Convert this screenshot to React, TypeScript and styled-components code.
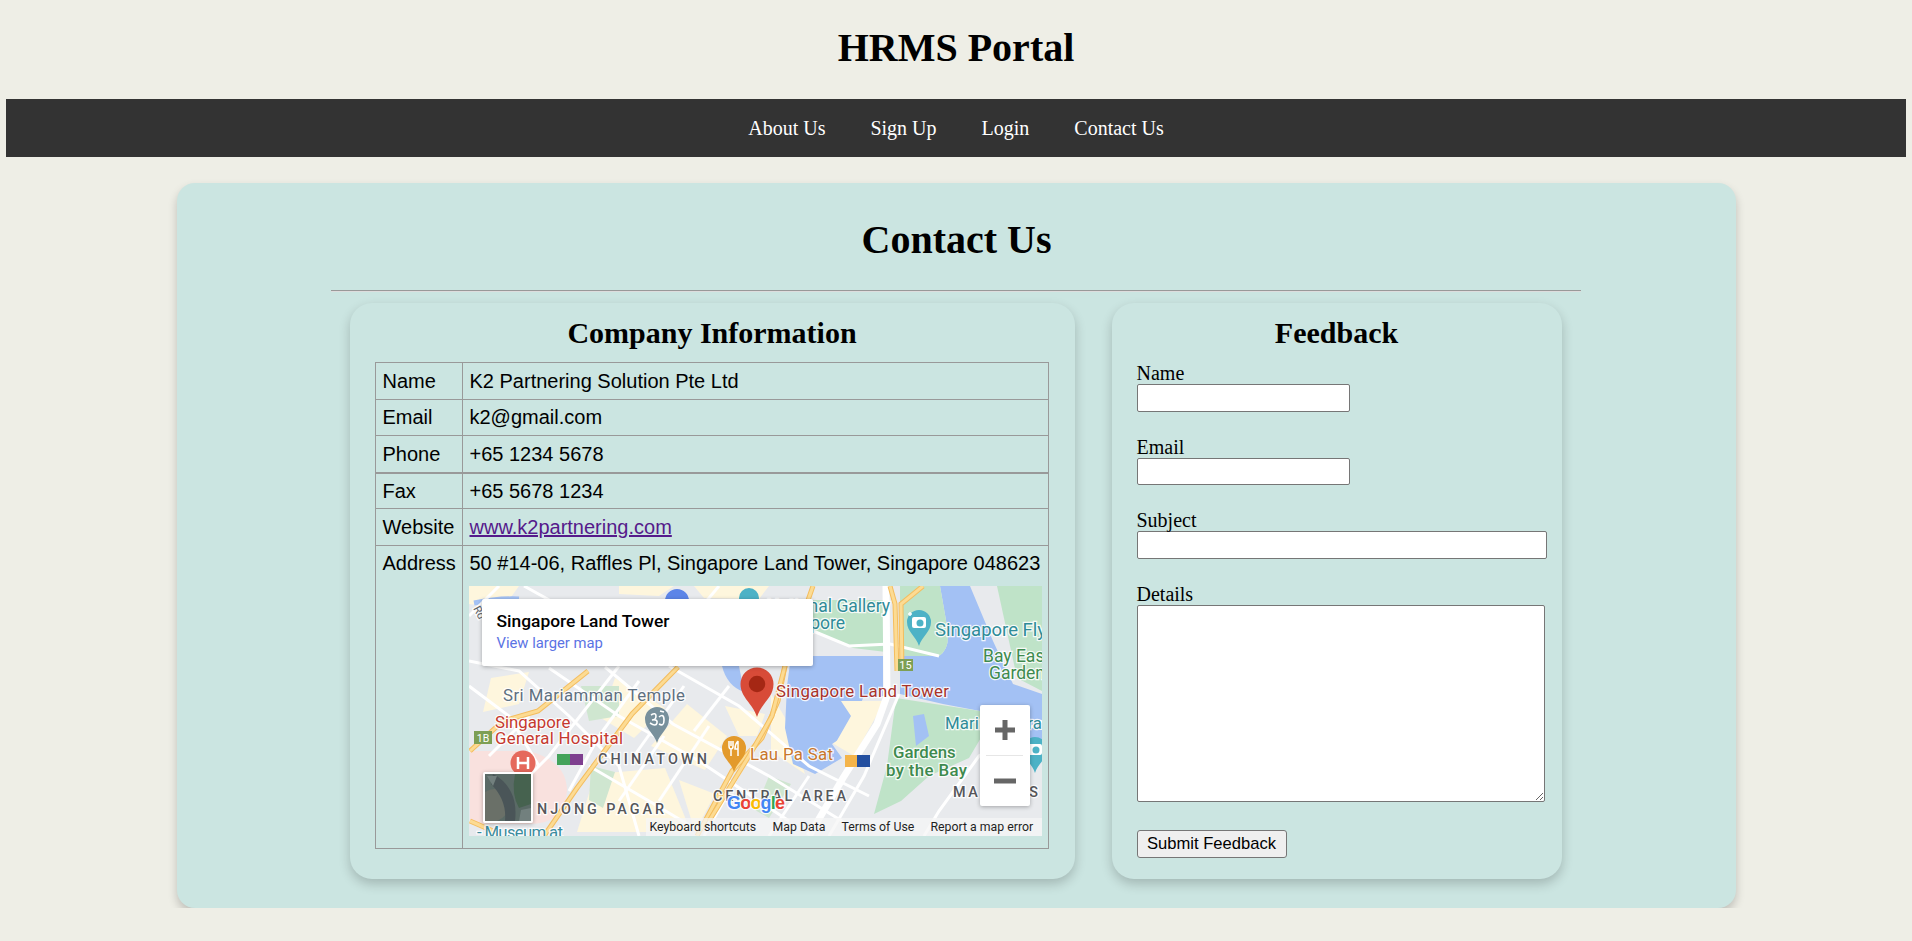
import styled, { createGlobalStyle } from 'styled-components';

const GlobalStyle = createGlobalStyle`
  body {
    margin: 0 6px;
    background-color: #eeeee6;
    color: #000;
    font-family: "Liberation Serif", serif;
    font-size: 20px;
  }
`;

const PageTitle = styled.h1`
  margin: 0;
  padding: 26px 0 29px;
  height: 99px;
  box-sizing: border-box;
  font-size: 40px;
  line-height: 44px;
  text-align: center;
`;

const NavBar = styled.nav`
  display: flex;
  justify-content: center;
  align-items: center;
  gap: 45px;
  height: 58px;
  background-color: #333;
`;

const NavLink = styled.a`
  color: #fff;
  text-decoration: none;
`;

const Panel = styled.main`
  width: 1559px;
  height: 725px;
  box-sizing: border-box;
  margin: 26px 0 0 171px;
  padding-top: 35px;
  background-color: #cbe5e1;
  border-radius: 18px;
  box-shadow: 0 5px 10px rgba(0, 0, 0, 0.2);
`;

const PanelTitle = styled.h1`
  margin: 0;
  font-size: 40px;
  line-height: 44px;
  text-align: center;
`;

const Rule = styled.hr`
  width: 1250px;
  margin: 28px 0 11px 154px;
  border: 0;
  border-top: 1px solid #999;
  border-bottom: 1px solid #ddd;
`;

const Cards = styled.div`
  display: flex;
  justify-content: center;
  gap: 37px;
  padding-right: 2px;
`;

const Card = styled.section<{ $width: number }>`
  width: ${p => p.$width}px;
  height: 576px;
  box-sizing: border-box;
  padding: 13px 25px 0;
  background-color: #cbe5e1;
  border-radius: 22px;
  box-shadow: 0 5px 12px rgba(0, 0, 0, 0.2);
`;

const CardTitle = styled.h2`
  margin: 0 0 13px;
  font-size: 30px;
  line-height: 33px;
  text-align: center;
`;

const InfoTable = styled.table`
  width: 674px;
  border-collapse: collapse;
  table-layout: fixed;
  font-family: "Liberation Sans", Arial, sans-serif;
  font-size: 20px;
  line-height: 24px;
`;

const Cell = styled.td<{ $label?: boolean }>`
  width: ${p => (p.$label ? '87px' : 'auto')};
  box-sizing: border-box;
  padding: 6px 5px 6px 7px;
  border: 1px solid #999;
  vertical-align: top;
  white-space: nowrap;
`;

const TightRow = styled.tr`
  td {
    padding-top: 5px;
    padding-bottom: 6px;
  }
`;

const ThickRow = styled(TightRow)`
  td {
    border-top-width: 2px;
    padding-top: 5px;
    padding-bottom: 5px;
  }
`;

const SiteLink = styled.a`
  color: #551a8b;
`;

const MapFrame = styled.div`
  position: relative;
  width: 573px;
  height: 250px;
  margin: 11px 0 6px -1px;
  overflow: hidden;
  background-color: #e8eaed;
  font-family: Roboto, sans-serif;
`;

const MapCanvas = styled.svg`
  display: block;
  font-family: Roboto, sans-serif;
`;

const MapLabel = styled.text<{ $color: string; $size?: number; $weight?: number }>`
  fill: ${p => p.$color};
  font-size: ${p => p.$size ?? 15}px;
  font-weight: ${p => p.$weight ?? 400};
  stroke: rgba(255, 255, 255, 0.85);
  stroke-width: 2.5px;
  paint-order: stroke;
`;

const InfoCard = styled.div`
  position: absolute;
  left: 13px;
  top: 13px;
  width: 331px;
  height: 67px;
  box-sizing: border-box;
  padding: 11px 15px;
  background-color: #fff;
  border-radius: 2px;
  box-shadow: 0 1px 4px rgba(0, 0, 0, 0.3);
`;

const PlaceName = styled.div`
  font-size: 17.4px;
  font-weight: 500;
  line-height: 22px;
  color: #000;
`;

const LargerMap = styled.div`
  margin-top: 2px;
  font-size: 14.8px;
  line-height: 18px;
  color: #5b73e4;
`;

const ZoomControl = styled.div`
  position: absolute;
  left: 511px;
  top: 119px;
  width: 50px;
  height: 101px;
  display: flex;
  flex-direction: column;
  align-items: center;
  background-color: #fff;
  border-radius: 2px;
  box-shadow: 0 1px 4px rgba(0, 0, 0, 0.3);
`;

const ZoomButton = styled.div`
  flex: 1;
  display: flex;
  align-items: center;
  justify-content: center;
`;

const ZoomDivider = styled.div`
  width: 37px;
  height: 1px;
  background-color: #e6e6e6;
`;

const SatelliteThumb = styled.div`
  position: absolute;
  left: 14px;
  top: 186px;
  width: 50px;
  height: 51px;
  box-sizing: border-box;
  border: 2px solid #fff;
  border-radius: 2px;
  overflow: hidden;
  box-shadow: 0 1px 4px rgba(0, 0, 0, 0.3);
`;

const Attribution = styled.div`
  position: absolute;
  right: 0;
  bottom: 0;
  height: 18px;
  width: 396px;
  box-sizing: border-box;
  padding-left: 4px;
  display: flex;
  align-items: center;
  font-size: 12.3px;
  color: #1f1f1f;
  background-color: rgba(245, 245, 245, 0.75);
`;

const AttributionItem = styled.span<{ $width: number }>`
  width: ${p => p.$width}px;
  white-space: nowrap;
`;

const FeedbackForm = styled.form`
  display: flex;
  flex-direction: column;
  align-items: flex-start;
`;

const FieldLabel = styled.label`
  display: block;
  line-height: 22px;
`;

const Field = styled.div<{ $gap: number }>`
  margin-bottom: ${p => p.$gap}px;
`;

const TextInput = styled.input<{ $width: number; $height: number }>`
  display: block;
  width: ${p => p.$width}px;
  height: ${p => p.$height}px;
  box-sizing: border-box;
  padding: 1px 2px;
  background: #fff;
  border: 1px solid #767676;
  border-radius: 2px;
  font-size: 16px;
`;

const DetailsBox = styled.textarea`
  display: block;
  width: 408px;
  height: 197px;
  box-sizing: border-box;
  margin: 0;
  padding: 2px;
  background: #fff;
  border: 1px solid #767676;
  border-radius: 2px;
`;

const SubmitButton = styled.button`
  width: 150px;
  height: 28px;
  padding: 0;
  background-color: #efefef;
  border: 1px solid #767676;
  border-radius: 3px;
  font-family: "Liberation Sans", Arial, sans-serif;
  font-size: 16.6px;
  color: #000;
`;

const blue = '#a3c1f4';
const green = '#bfe3c8';
const cream = '#fef6dd';

const creamBlocks = [
  '0,0 50,0 34,22 0,18',
  '150,0 205,0 190,10 150,8',
  '225,0 300,0 290,13 235,12',
  '22,92 60,86 50,118 14,126',
  '146,92 196,122 165,152 132,132',
  '218,118 258,150 236,184 182,160',
  '256,120 296,128 288,150 270,150',
  '126,188 196,182 222,246 108,246',
  '210,194 246,208 226,246',
  '302,108 318,135 336,188 302,165',
  '375,115 414,118 385,170 360,155',
];

const parks = [
  '112,100 150,100 150,130 120,135',
  '122,180 146,186 134,222 120,214',
  '300,190 322,198 300,232 286,224',
];

const whiteRoads = [
  '136,81 204,138 300,190 381,240',
  '80,82 150,130 230,175 320,235',
  '200,80 270,120 340,180 400,210',
  '0,75 50,85 100,130 150,180 170,250',
  '60,130 20,170',
  '150,80 80,170 60,190',
  '240,140 190,215',
  '280,170 235,250',
  '195,150 150,215',
  '340,190 300,250',
  '344,45 380,60 421,58 470,70',
  '30,0 0,30',
  '55,0 100,25 150,60',
  '250,0 225,30 200,60',
  '0,100 40,130 70,180',
  '170,95 130,150 100,205',
  '215,100 165,170',
  '120,180 180,215 230,245',
  '260,100 225,145',
];

const highways = [
  '209,81 163,128 108,202 75,250',
  '119,85 69,125 34,135 1,165',
  '1,235 31,248',
  '344,0 316,80 309,115 293,152 263,185 228,250',
  '316,80 303,130 280,170 240,235',
  '421,0 426,18 428,85',
  '454,0 432,18 433,85',
];

function Marker({ x, y, color, r = 12, children }: { x: number; y: number; color: string; r?: number; children?: React.ReactNode }) {
  return (
    <g transform={`translate(${x} ${y}) scale(${r / 12})`}>
      <path d="M0 24C-3 14-12 10-12 0A12 12 0 1 1 12 0C12 10 3 14 0 24Z" fill={color} />
      {children}
    </g>
  );
}

function MapDrawing() {
  return (
    <MapCanvas width={573} height={250} viewBox="0 0 573 250">
      <rect width={573} height={250} fill="#e8eaed" />
      {creamBlocks.map(points => <polygon key={points} points={points} fill={cream} />)}
      <path d="M1 165H60Q98 175 98 205Q96 238 60 238H1Z" fill="#f9e1de" />
      {parks.map(points => <polygon key={points} points={points} fill="#cfe6d0" />)}

      {/* water */}
      <path d="M471 0H501L524 55L544 98L573 108V168L515 150L511 125L474 118L431 108V70H470Q482 62 478 40Z" fill={blue} />
      <path d="M322 70H414V110L394 112L388 128L378 148L363 158L373 172L346 188L324 178L316 142L318 100Z" fill={blue} />
      <path d="M253 80H270L275 106Q258 100 253 80Z" fill={blue} />
      <path d="M5 17Q30 12 50 13" stroke={blue} strokeWidth={5} fill="none" />

      {/* parks */}
      <path d="M344 14H417V66L384 62L344 46Z" fill={green} />
      <path d="M431 0H471L478 40Q482 62 470 70H431Z" fill={green} />
      <path d="M528 0H573V105L548 92Z" fill={green} />
      <path d="M427 112L511 125L513 150L500 172L460 190L432 215L405 228L418 180Z" fill={green} />
      <path d="M444 130L455 128L460 150L447 160Z" fill={blue} />
      <path d="M372 115H414L384 168L366 158L382 130Z" fill={cream} />

      {whiteRoads.map(points => (
        <polyline key={points} points={points} fill="none" stroke="#fff" strokeWidth={3} />
      ))}
      <polyline points="417,0 418,110 408,138 374,192 340,250" fill="none" stroke="#fff" strokeWidth={7} />
      <polyline points="430,108 395,190 360,250" fill="none" stroke="#fff" strokeWidth={3} />
      <polyline points="573,135 510,170 470,225 455,250" fill="none" stroke="#fff" strokeWidth={3} />
      {highways.map(points => (
        <g key={points}>
          <polyline points={points} fill="none" stroke="#f4bd5e" strokeWidth={5} />
          <polyline points={points} fill="none" stroke="#fcdb93" strokeWidth={3} />
        </g>
      ))}

      <Marker x={208} y={15} color="#5c85e8" />
      <Marker x={280} y={12} color="#4db2c6" r={10} />

      <MapLabel x={421} y={26} textAnchor="end" $color="#2f8b98" $size={17.5}>National Gallery</MapLabel>
      <MapLabel x={376} y={43} textAnchor="end" $color="#2f8b98" $size={17.5}>Singapore</MapLabel>
      <Marker x={450} y={36} color="#4db2c6">
        <rect x={-7} y={-5} width={14} height={11} rx={2} fill="#fff" />
        <circle cx={1} cy={1} r={3.5} fill="#4db2c6" />
        <path d="M-11-8H-7M-9-10V-6" stroke="#fff" strokeWidth={1.5} />
      </Marker>
      <MapLabel x={466} y={50} $color="#2f8b98" $size={18.5}>Singapore Flyer</MapLabel>
      <rect x={429} y={73} width={15} height={12} fill="#7d9f54" />
      <text x={436.5} y={83} textAnchor="middle" fontSize={11} fill="#fff">15</text>
      <MapLabel x={514} y={76} $color="#3e8a4e" $size={17.5}>Bay East</MapLabel>
      <MapLabel x={520} y={93} $color="#3e8a4e" $size={17.5}>Garden</MapLabel>

      <MapLabel x={2} y={26} transform="rotate(62 6 26)" $color="#5f6368" $size={11}>Rd</MapLabel>
      <MapLabel x={34} y={115} textLength={182} $color="#5f7080" $size={16.8}>Sri Mariamman Temple</MapLabel>
      <Marker x={188} y={133} color="#78909c">
        <path d="M-6-4Q-1-7-1-3T-5 1Q1 0 0 4T-7 4M2-2Q7-6 7 1T2 5M3-8L7-7" fill="none" stroke="#fff" strokeWidth={1.6} />
      </Marker>
      <MapLabel x={26} y={142} $color="#c5392e" $size={16.8}>Singapore</MapLabel>
      <MapLabel x={26} y={158} textLength={128} $color="#c5392e" $size={16.8}>General Hospital</MapLabel>
      <rect x={5} y={145} width={18} height={13} fill="#7d9f54" />
      <text x={14} y={155.5} textAnchor="middle" fontSize={10.5} fill="#fff">1B</text>
      <circle cx={54} cy={177} r={12.5} fill="#e5695c" />
      <path d="M49 171V183M59 171V183M49 177H59" stroke="#fff" strokeWidth={2.5} />
      <rect x={88} y={168} width={13} height={11} fill="#43a35a" />
      <rect x={101} y={168} width={13} height={11} fill="#7e3f8f" />
      <MapLabel x={129} y={178} textLength={109} $color="#55565a" $size={14.4} $weight={500}>CHINATOWN</MapLabel>
      <MapLabel x={68} y={228} textLength={127} $color="#55565a" $size={14.4} $weight={500}>NJONG PAGAR</MapLabel>
      <MapLabel x={244} y={215} textLength={133} $color="#55565a" $size={14.4} $weight={500}>CENTRAL AREA</MapLabel>
      <MapLabel x={484} y={211} textLength={85} $color="#55565a" $size={14.4} $weight={500}>MARINA S</MapLabel>
      <MapLabel x={8} y={252} textLength={86} $color="#3a8c9e" $size={16.8}>- Museum at</MapLabel>

      <Marker x={265} y={162} color="#e39a2c">
        <path d="M-5-7V-2Q-5 1-3 1V8M-3-7V-2M-1-7V-2Q-1 1-3 1M4-7V8M4-7Q1-4 1 1H4" fill="none" stroke="#fff" strokeWidth={1.5} />
      </Marker>
      <MapLabel x={281} y={174} textLength={83} $color="#c9772b" $size={16.8}>Lau Pa Sat</MapLabel>
      <rect x={376} y={169} width={12} height={12} fill="#f4b44a" />
      <rect x={388} y={169} width={13} height={12} fill="#2450a0" />
      <MapLabel x={424} y={172} $color="#3e8a4e" $size={16.8} $weight={500}>Gardens</MapLabel>
      <MapLabel x={417} y={190} textLength={81} $color="#3e8a4e" $size={16.8} $weight={500}>by the Bay</MapLabel>
      <MapLabel x={476} y={143} textLength={97} $color="#2f8b98" $size={16.8}>Marina Barra</MapLabel>
      <Marker x={566} y={163} color="#4db2c6">
        <rect x={-7} y={-5} width={14} height={11} rx={2} fill="#fff" />
        <circle cx={1} cy={1} r={3.5} fill="#4db2c6" />
      </Marker>

      <Marker x={288} y={98} color="#d84b38" r={16.5}>
        <circle r={6} fill="#a52714" />
      </Marker>
      <MapLabel x={307} y={111} textLength={173} $color="#a8322a" $size={16.8}>Singapore Land Tower</MapLabel>

      <MapLabel x={258} y={223} textLength={58} fontFamily="Liberation Sans" $color="#4285f4" $size={18} $weight={700}>
        G<tspan fill="#ea4335">o</tspan><tspan fill="#fbbc05">o</tspan><tspan fill="#4285f4">g</tspan><tspan fill="#34a853">l</tspan><tspan fill="#ea4335">e</tspan>
      </MapLabel>
    </MapCanvas>
  );
}

function SatelliteTile() {
  return (
    <svg width={46} height={47} viewBox="0 0 46 47">
      <rect width={46} height={47} fill="#5a6a66" />
      <path d="M30 0H46V30L34 34Q26 20 30 0Z" fill="#46624f" />
      <path d="M0 18Q14 10 22 24T12 47H0Z" fill="#6a7068" />
      <path d="M8 0Q20 6 26 18T30 47H20Q22 26 6 10Z" fill="#4a5558" />
      <path d="M2 2H12L8 12ZM36 36L46 34V47H34Z" fill="#72807e" />
    </svg>
  );
}

function MapEmbed() {
  return (
    <MapFrame>
      <MapDrawing />
      <InfoCard>
        <PlaceName>Singapore Land Tower</PlaceName>
        <LargerMap>View larger map</LargerMap>
      </InfoCard>
      <ZoomControl>
        <ZoomButton>
          <svg width={22} height={22} viewBox="0 0 22 22"><path d="M11 1V21M1 11H21" stroke="#666" strokeWidth={5} /></svg>
        </ZoomButton>
        <ZoomDivider />
        <ZoomButton>
          <svg width={22} height={22} viewBox="0 0 22 22"><path d="M0 11H22" stroke="#666" strokeWidth={5} /></svg>
        </ZoomButton>
      </ZoomControl>
      <SatelliteThumb><SatelliteTile /></SatelliteThumb>
      <Attribution>
        <AttributionItem $width={123}>Keyboard shortcuts</AttributionItem>
        <AttributionItem $width={69}>Map Data</AttributionItem>
        <AttributionItem $width={89}>Terms of Use</AttributionItem>
        <AttributionItem $width={105}>Report a map error</AttributionItem>
      </Attribution>
    </MapFrame>
  );
}

export default function App() {
  return (
    <>
      <GlobalStyle />
      <PageTitle>HRMS Portal</PageTitle>
      <NavBar>
        <NavLink href="#">About Us</NavLink>
        <NavLink href="#">Sign Up</NavLink>
        <NavLink href="#">Login</NavLink>
        <NavLink href="#">Contact Us</NavLink>
      </NavBar>
      <Panel>
        <PanelTitle>Contact Us</PanelTitle>
        <Rule />
        <Cards>
          <Card $width={725}>
            <CardTitle>Company Information</CardTitle>
            <InfoTable>
              <tbody>
                <tr><Cell $label>Name</Cell><Cell>K2 Partnering Solution Pte Ltd</Cell></tr>
                <TightRow><Cell $label>Email</Cell><Cell>k2@gmail.com</Cell></TightRow>
                <tr><Cell $label>Phone</Cell><Cell>+65 1234 5678</Cell></tr>
                <ThickRow><Cell $label>Fax</Cell><Cell>+65 5678 1234</Cell></ThickRow>
                <tr><Cell $label>Website</Cell><Cell><SiteLink href="#">www.k2partnering.com</SiteLink></Cell></tr>
                <TightRow>
                  <Cell $label>Address</Cell>
                  <Cell>
                    50 #14-06, Raffles Pl, Singapore Land Tower, Singapore 048623
                    <MapEmbed />
                  </Cell>
                </TightRow>
              </tbody>
            </InfoTable>
          </Card>
          <Card $width={450}>
            <CardTitle>Feedback</CardTitle>
            <FeedbackForm>
              <Field $gap={24}>
                <FieldLabel>Name</FieldLabel>
                <TextInput $width={213} $height={28} />
              </Field>
              <Field $gap={24}>
                <FieldLabel>Email</FieldLabel>
                <TextInput $width={213} $height={27} />
              </Field>
              <Field $gap={24}>
                <FieldLabel>Subject</FieldLabel>
                <TextInput $width={410} $height={28} />
              </Field>
              <Field $gap={28}>
                <FieldLabel>Details</FieldLabel>
                <DetailsBox />
              </Field>
              <SubmitButton type="button">Submit Feedback</SubmitButton>
            </FeedbackForm>
          </Card>
        </Cards>
      </Panel>
    </>
  );
}
